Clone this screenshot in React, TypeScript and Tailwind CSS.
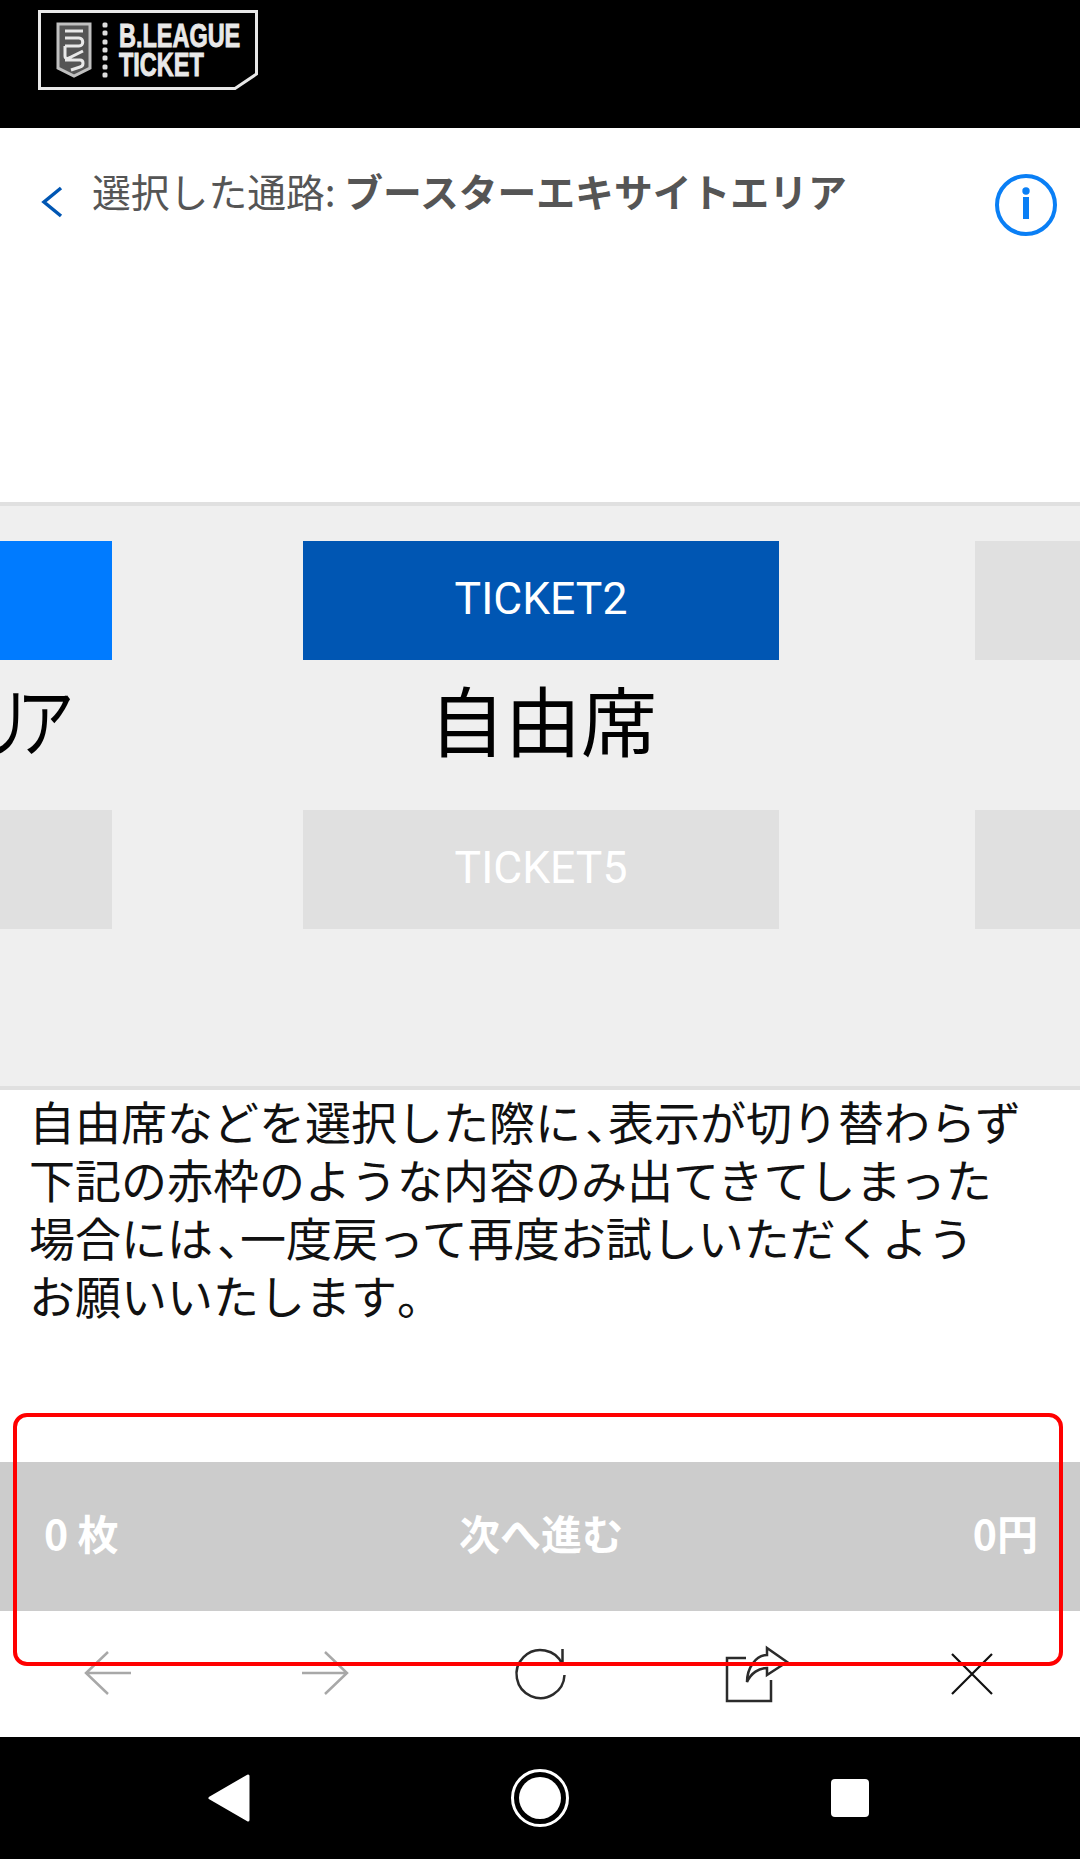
import type { ReactNode } from 'react'

const Logo = () => (
  <div className="relative ml-[38px] mt-[10px] flex h-[80px] w-[220px] items-center">
    <svg viewBox="0 0 220 80" className="absolute inset-0 h-full w-full" fill="none">
      <path d="M1.5 1.5H218.5V64L197 78.5H1.5Z" stroke="#e8e8e8" strokeWidth="3" />
      <path d="M20 14H52V58L36 66L20 58Z" stroke="#c0c0c0" strokeWidth="3" fill="#555" />
      <path
        d="M27 21H45M27 28H41C46 28 46 36 41 36H27M27 36V46C27 49 30 49 33 47L45 41M27 50H42C46 50 46 56 42 57L33 60"
        stroke="#e8e8e8"
        strokeWidth="3"
      />
      {[15, 23, 32, 40, 48, 57, 65].map((y) => (
        <rect key={y} x="64.5" y={y - 2.5} width="5" height="5" rx="1.5" fill="#dddddd" />
      ))}
    </svg>
    <div className="relative ml-[81px] origin-left scale-x-[0.69] font-['Liberation_Sans',sans-serif] text-[34px] leading-[29px] font-bold whitespace-nowrap text-[#e8e8e8] [-webkit-text-stroke:1px_#e8e8e8]">
      <div>B.LEAGUE</div>
      <div>TICKET</div>
    </div>
  </div>
)

const Tile = ({ label, className }: { label?: string; className: string }) => (
  <div
    className={`flex h-[119px] w-[476px] shrink-0 items-center justify-center pb-[2px] font-['Roboto',sans-serif] text-[44.5px] text-white ${className}`}
  >
    {label}
  </div>
)

const ToolIcon = ({ children }: { children: ReactNode }) => (
  <div className="flex justify-center">
    <svg viewBox="0 0 60 60" className="h-[60px] w-[60px] overflow-visible" fill="none">
      {children}
    </svg>
  </div>
)

export default function App() {
  return (
    <div className="relative flex h-[1859px] w-[1080px] flex-col overflow-hidden bg-white font-['Noto_Sans_CJK_JP','Noto_Sans',sans-serif]">
      <header className="h-[128px] shrink-0 bg-black">
        <Logo />
      </header>

      <div className="flex h-[374px] shrink-0 items-start justify-between pl-[40px] pr-[23px] pt-[43px]">
        <div className="flex items-start">
          <svg viewBox="0 0 24 32" className="mt-[15px] h-[32px] w-[24px]" fill="none" stroke="#0056b3" strokeWidth="3.5">
            <path d="M21 2L4 16L21 30" />
          </svg>
          <p className="ml-[28px] mt-[-7px] text-[38.8px] leading-[52px] text-[#555] whitespace-nowrap">
            選択した通路: <span className="font-bold">ブースターエキサイトエリア</span>
          </p>
        </div>
        <svg viewBox="0 0 62 62" className="mt-[3px] h-[62px] w-[62px]" fill="none">
          <circle cx="31" cy="31" r="29" stroke="#0a7ff5" strokeWidth="4" />
          <circle cx="31" cy="17" r="3.7" fill="#0a7ff5" />
          <path d="M31 23V45" stroke="#0a7ff5" strokeWidth="6" />
        </svg>
      </div>

      <section className="h-[588px] shrink-0 overflow-hidden border-y-[4px] border-[#e0e0e0] bg-[#efefef] pt-[35px]">
        <div className="ml-[-364px] flex gap-[191px]">
          <Tile className="bg-[#007bff]" />
          <Tile label="TICKET2" className="bg-[#0056b3]" />
          <Tile className="ml-[5px] bg-[#e0e0e0]" />
        </div>
        <div className="ml-[-364px] flex h-[150px] items-center gap-[191px] pb-[34px] text-[76px] leading-none text-black">
          <div className="w-[476px] shrink-0 pr-[46px] text-right whitespace-nowrap">
            <span className="inline-block origin-right scale-x-[0.75] tracking-[-8px] [font-feature-settings:'palt']">リア</span>
          </div>
          <div className="w-[476px] shrink-0 pl-[4px] text-center">自由席</div>
        </div>
        <div className="ml-[-364px] flex gap-[191px]">
          <Tile className="bg-[#e0e0e0]" />
          <Tile label="TICKET5" className="bg-[#e0e0e0]" />
          <Tile className="ml-[5px] bg-[#e0e0e0]" />
        </div>
      </section>

      <p className="h-[372px] shrink-0 pl-[29px] pt-[1px] text-[46px] leading-[58px] text-[#111]">
        自由席などを選択した際に<span className="ml-[4px] [font-feature-settings:'halt']">、</span>表示が切り替わらず
        <br />
        下記の赤枠のような内容のみ出てきてしまった
        <br />
        場合には<span className="ml-[4px] [font-feature-settings:'halt']">、</span>一度戻って再度お試しいただくよう
        <br />
        お願いいたします<span className="[font-feature-settings:'halt']">。</span>
      </p>

      <div className="grid h-[149px] shrink-0 grid-cols-3 items-center bg-[#cccccc] pb-[7px] pl-[44px] pr-[42px] text-[41px] font-bold text-white">
        <span>0 枚</span>
        <span className="text-center">次へ進む</span>
        <span className="text-right">0円</span>
      </div>

      <nav className="grid h-[126px] shrink-0 grid-cols-5 items-center">
        <ToolIcon>
          <path d="M53 29H8M30 8L8 29L30 50" stroke="#a8a8a8" strokeWidth="2.5" />
        </ToolIcon>
        <ToolIcon>
          <path d="M8 29H53M31 8L53 29L31 50" stroke="#a8a8a8" strokeWidth="2.5" />
        </ToolIcon>
        <ToolIcon>
          <path d="M54.5 31A24 24 0 1 1 52.5 20.4V5" stroke="#2b2b2b" strokeWidth="2.5" />
        </ToolIcon>
        <ToolIcon>
          <path d="M20 14H1V57H45V36" stroke="#2b2b2b" strokeWidth="2.5" />
          <path d="M41 4L61 18L41 31V24C33 24 25 29 21 38C21 24 30 11 41 11Z" stroke="#2b2b2b" strokeWidth="2.5" />
        </ToolIcon>
        <ToolIcon>
          <path d="M10 10L50 50M50 10L10 50" stroke="#111111" strokeWidth="2.2" />
        </ToolIcon>
      </nav>

      <footer className="flex h-[122px] shrink-0 items-center justify-center bg-black">
        <div className="flex w-[311px] justify-center">
          <svg viewBox="0 0 42 50" className="h-[50px] w-[42px]" fill="#fff" stroke="#fff" strokeWidth="3" strokeLinejoin="round">
            <path d="M40 3V47L2 25Z" />
          </svg>
        </div>
        <div className="flex w-[311px] justify-center">
          <svg viewBox="0 0 60 60" className="h-[60px] w-[60px]" fill="none">
            <circle cx="30" cy="30" r="27.5" stroke="#fff" strokeWidth="3" />
            <circle cx="30" cy="30" r="21" fill="#fff" />
          </svg>
        </div>
        <div className="flex w-[311px] justify-center pr-[2px]">
          <div className="h-[38px] w-[38px] rounded-[4px] bg-white" />
        </div>
      </footer>

      <div className="pointer-events-none absolute left-[13px] top-[1413px] h-[253px] w-[1050px] rounded-[14px] border-[4px] border-[#ff0000]" />
    </div>
  )
}
